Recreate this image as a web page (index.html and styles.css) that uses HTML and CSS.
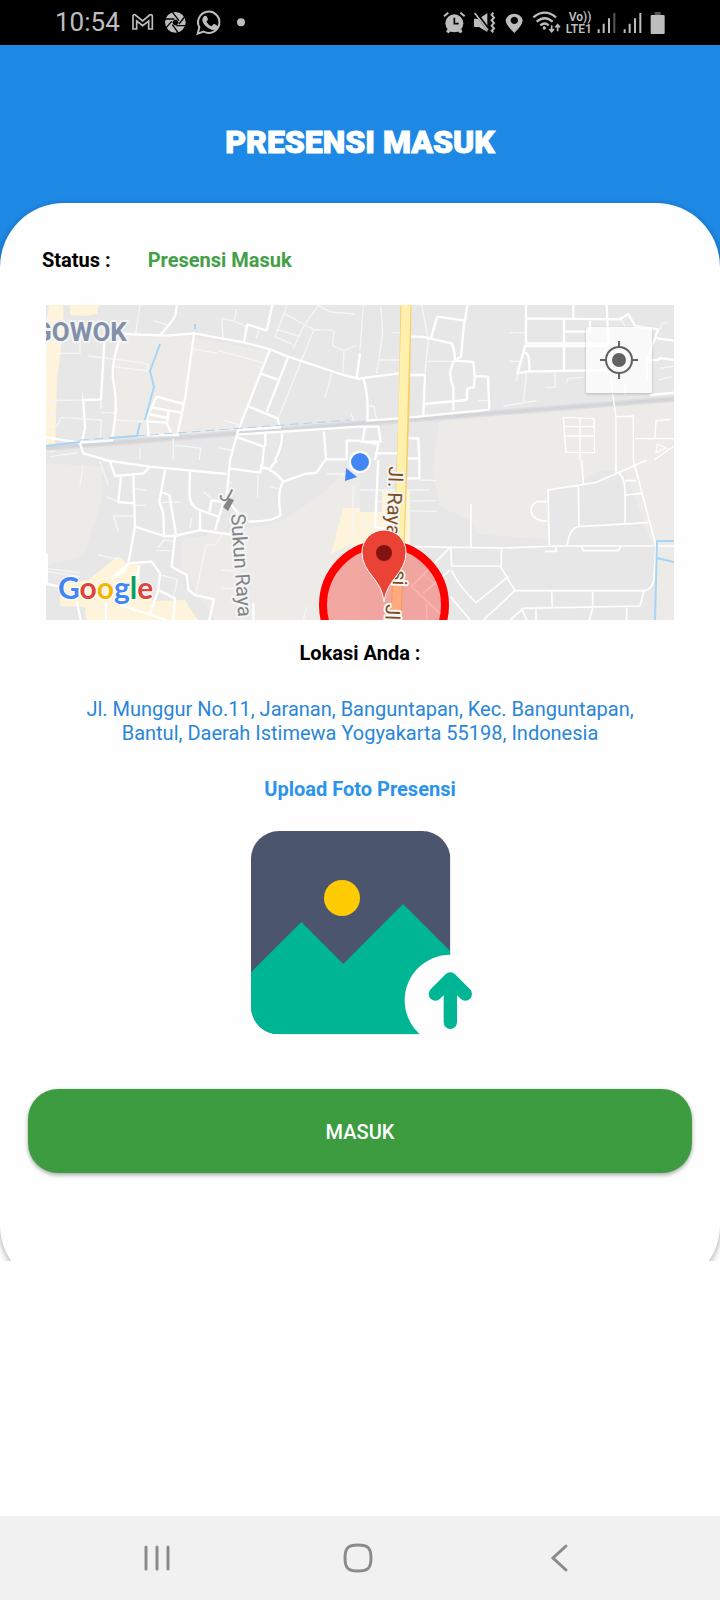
FILE: index.html
```html
<!DOCTYPE html>
<html lang="id">
<head>
<meta charset="utf-8">
<meta name="viewport" content="width=device-width, initial-scale=1">
<title>Presensi Masuk</title>
<link rel="stylesheet" href="styles.css">
</head>
<body>
<div class="statusbar">
  <time class="clock">10:54</time>
  <svg class="status-left" viewBox="393 0 348 132" aria-hidden="true">
    <path d="M399 87V49q0-8 7-4l22 18 21-18q8-4 8 4v38h-11V63l-18 14-18-14v24z" fill="none" stroke="#bdbdbd" stroke-width="5"/>
    <circle cx="526" cy="67" r="31" fill="#bdbdbd"/>
    <path d="M537 62L516 35M537 72L556 48M529 77L558 77M517 74L535 99M515 64L496 86M523 57L495 57" stroke="#000" stroke-width="4"/>
    <path d="M522 59h9l5 8-5 9h-9l-5-9z" fill="#000"/>
    <path d="M593 101l5-19a32 32 0 1 1 13 13z" fill="none" stroke="#bdbdbd" stroke-width="6"/>
    <path d="M612 49q4-4 8 0l4 9q0 3-5 7 6 10 16 14l5-6q2-2 5 0l8 5q2 2-1 7-6 8-17 4-21-7-28-27-1-8 5-13z" fill="#bdbdbd"/>
    <circle cx="723" cy="67" r="12" fill="#bdbdbd"/>
  </svg>
  <svg class="status-right" viewBox="130 0 669 132" aria-hidden="true">
    <g fill="#bdbdbd">
      <circle cx="164" cy="70" r="27"/>
      <path d="M142 88l12 5-7 7-7-4zM186 88l-12 5 7 7 7-4z"/>
      <path d="M133 49l13-11M195 49l-13-11" stroke="#bdbdbd" stroke-width="6"/>
      <path d="M164 53v18h13" fill="none" stroke="#000" stroke-width="5"/>
      <path d="M223 56h15l25-17v57l-25-15h-15z"/>
      <path d="M226 35l46 62" stroke="#000" stroke-width="10"/>
      <path d="M225 39l40 52" stroke="#bdbdbd" stroke-width="5"/>
      <path d="M281 38l-5 7 7 8-7 8 7 8-7 8 7 8-7 7 5 5" fill="none" stroke="#bdbdbd" stroke-width="6"/>
      <path fill-rule="evenodd" d="M344 99q-26-24-26-38a26 25 0 0 1 51 0q0 14-25 38zM344 50a11 11 0 1 0 .1 0z"/>
      <g fill="none" stroke="#bdbdbd" stroke-width="7">
        <path d="M401 52q34-28 68 0M411 65q24-21 48 0M422 76q13-11 25 0"/>
        <path d="M456 76v18m-7-7l7 8 7-8M474 94V74m-7 8l7-8 7 8" stroke-width="5"/>
      </g>
      <circle cx="434" cy="84" r="5"/>
      <text x="507" y="63" class="volte">Vo))</text>
      <text x="498" y="99" class="volte">LTE1</text>
      <path d="M594 88h6v11h-6zM609 71h6v28h-6zM625 55h6v44h-6zM672 88h6v11h-6zM687 71h6v28h-6zM703 55h6v44h-6zM719 39h6v60h-6z"/>
      <path d="M641 39h6v60h-6zM765 36h18v9h-18z" fill="#555"/>
      <rect x="753" y="45" width="42" height="57" rx="3"/>
    </g>
  </svg>
</div>

<main class="screen">
  <header class="header"><h1 class="title">PRESENSI MASUK</h1></header>
  <section class="card">
    <dl class="status"><dt>Status :</dt><dd>Presensi Masuk</dd></dl>

    <div class="map">
      <svg class="map-art" viewBox="46 305 628 315" role="img" aria-label="Peta lokasi">
        <rect x="46" y="305" width="628" height="315" fill="#e7e7e7"/>
        <g fill="#ecebe7">
          <path d="M118 336L192 334 182 433 112 438 115 370z"/>
          <path d="M193 338L268 351 238 434 182 434z"/>
          <path d="M46 463L102 467 102 500 84 555 46 566z"/>
          <path d="M440 421L674 400V620H655V545L550 540 477 534 471 520 440 507 432 470z"/>
          <path d="M280 522Q340 485 348 463H360V620H215L180 565 182 540z"/>
        </g>
        <path fill="#e7e7e7" d="M546 490L575 485 600 470 625 472 652 545 550 540z"/>
        <g fill="#fdf4db">
          <path d="M49 305H63L64 325 57 380 55 452H46V325zM70 305H99L97 314 85 316 70 315z"/>
          <path d="M343 508H360V512H382V491H410V545H350L331 554z"/>
          <path d="M118 556L126 563 140 565V594L155 601 185 600 198 620H86L85 607 60 606V584L88 580z"/>
        </g>
        <path d="M46 448L125 442 674 399" fill="none" stroke="#dcdddf" stroke-width="6"/>
        <path d="M46 448L125 442 674 399" fill="none" stroke="#d3d5d9" stroke-width="3"/>

        <g class="minor" transform="translate(40 300) scale(.33333)">
          <path d="M120 60V160H60M22 160V80M300 15L287 100M340 62L382 75M145 168L305 188 326 193 320 213 222 200M128 278V300L20 302M185 325H183V300M18 380H50L64 352 185 360 180 415M38 305L35 346H20M185 338H225M225 360L320 365M460 147L534 160M534 152L668 188M620 80L580 62 545 55 550 115M583 60L590 28M657 92L648 115M740 15L733 40 790 72M733 40L705 110 760 133M710 88L775 108M835 16L790 80 760 145M790 75L822 88 882 92 878 137 912 152 950 135M912 152L908 225M835 16L870 36 945 42M822 88L715 355M876 218L855 293M932 340L942 362M550 360L595 374M400 415V480M405 436L482 444 478 480M535 444L575 450M300 445V480M30 470L115 458M415 380V410"/>
        </g>
        <g class="roads" transform="translate(40 300) scale(.33333)">
          <path d="M250 102L380 107 462 100 615 128 690 148 745 170 910 225 960 237"/>
          <path d="M410 15L407 42Q402 60 362 103M193 125L183 298 130 300 135 385 126 425M238 120Q208 210 223 260 235 330 215 420M462 100L436 290 412 405 325 405 322 350 350 290 430 312M335 322L388 332 424 338M330 343L382 354 386 332M328 365L380 368 394 400M388 332L382 365M18 412L120 428 220 421M120 430L130 460 200 480"/>
          <path d="M690 148L595 390 720 382 712 355 622 318M660 220L712 238M745 170L680 335M595 390L570 480M592 412L672 440 668 480M676 402V440M726 400Q728 440 705 480M852 395L858 478H920V422H960M590 404L960 380M697 15L680 92 622 73 612 128M960 160L950 235"/>
        </g>
        <g class="minor" transform="translate(360 300) scale(.33333)">
          <path d="M10 15L0 150M62 18L68 100 50 222M95 98H120M60 180H118M185 15L205 120 195 220M200 184H285M448 98H495M448 184H480L470 245M500 215L490 310M430 318L530 302M585 220V262H555M618 250L625 235 670 232M780 50L795 80M900 90L905 70 922 68M900 204L942 200M895 240L935 230M795 250V285M355 302H388M25 318H42L50 360"/>
        </g>
        <g class="roads" transform="translate(360 300) scale(.33333)">
          <path d="M150 110H185L275 130Q288 160 283 182 260 220 280 260V332M212 117L232 50 315 62 322 15M313 62L303 170 283 182 340 186 344 228 384 230 388 328M344 228L342 262 322 265 320 300 192 312M150 225H195L190 345M0 235L118 220M10 235Q26 280 22 362L120 355 388 329M498 15V130L472 220 500 215 740 210M498 55L780 58 805 42 825 78 895 88 860 180 862 240M640 15V55M740 15L745 130H498M498 138H745M612 58V215M612 95H690V62M492 160Q510 150 508 215M890 115L942 122M865 180H895L900 174 942 180M870 285L942 278"/>
          <path d="M610 352L702 356 704 458 618 457zM660 354V480M610 380H703M610 408H703" stroke-width="4"/>
          <path d="M752 240L768 350V480M768 350L820 348 820 480M825 416H942M885 414L888 362 932 358M885 478L942 438M892 432L888 458 920 444Z" stroke-width="4"/>
          <path d="M0 380H55L62 425H0M15 380L8 425 55 432 45 480M138 414L175 416 178 480M45 460H118M138 475H175"/>
        </g>
        <g class="minor" transform="translate(40 460) scale(.33333)">
          <path d="M128 15L120 80M180 5L205 75M198 110L235 125M280 85L318 90M285 136H318M280 168H220L235 215M175 285L235 298M355 128L420 126M350 272H392M400 244L372 240 352 265M545 225L525 255H498L468 400M455 175L450 205M490 95L515 115M655 45L652 112M690 80L715 85M545 330L600 335M545 385H590M20 325L120 338M20 335L120 350M860 42H930M940 80L935 290M560 70L575 68M800 440L790 480M360 345L412 358 402 405"/>
        </g>
        <g class="roads" transform="translate(40 460) scale(.33333)">
          <path d="M190 0L330 20 560 42M210 5L225 48 310 40 330 20M243 48L235 126 285 130M280 42L285 200 265 310 215 355M376 25L358 125 370 160 372 228M360 95L388 105 408 222M450 32L448 100Q448 140 480 150L540 172M515 120L508 155M285 200L372 228 405 228 480 210 580 225M480 152V210M515 120L550 128 525 210M570 0L560 110M570 25L660 38 670 0M660 18Q705 30 730 65L795 42 830 38 855 0M730 65Q710 90 722 165 700 185 625 184M560 120L600 165"/>
          <path d="M405 228L395 320 440 345 446 390 465 405 522 418 508 480M215 355L250 335 265 310 335 305 360 340 355 390 330 460M298 315L290 360M110 425L122 480M198 425V480M240 435L380 480M355 390L405 415 400 480M20 280V372L60 380M640 430V480M690 25L710 0"/>
        </g>
        <g class="minor" transform="translate(360 460) scale(.33333)">
          <path d="M0 90H208M50 125L230 122M130 152L230 154M178 60L228 62M0 195L65 210M190 345L250 390"/>
        </g>
        <g class="roads" transform="translate(360 460) scale(.33333)">
          <path d="M55 0L45 200 80 208M178 0V55H138"/>
          <g stroke-width="5">
            <path d="M333 132V260M145 260L430 264 590 258H942M270 262L155 380 260 480M272 262L275 318H420L465 392H855Q883 385 883 340L888 258 820 0M424 264V318M275 330Q290 370 348 428L445 350M465 392L370 480M450 480L490 445 840 438 852 392M575 392L577 445M698 392V445L688 480M272 410L330 480M485 445L500 480M528 445V480M800 440V480M568 260L564 90 705 68 775 38 860 0M562 125H530Q512 135 513 155 520 182 562 184M655 75L657 200M622 255Q628 205 655 200L865 188M665 0L670 72M775 38Q795 50 795 100V190M795 62H828M798 105L845 100M555 274H588V258M665 260L670 272H775L782 260M768 0V38"/>
            <path d="M270 330L190 400M200 430V480"/>
          </g>
        </g>

        <g fill="none" stroke="#a8d4f5" stroke-width="2">
          <path d="M160 344L150 371 154 387 145 420M140 423L137 436 110 438M46 446L80 442M195 324V329M674 541L657 541 655 620M657 558L674 562"/>
          <path d="M80 440L190 432 350 420" stroke-width="1" stroke-dasharray="9 5"/>
        </g>
        <path d="M406 305L404 410 400 520 396 620" fill="none" stroke="#f7cf68" stroke-width="11"/>
        <path d="M406 305L403 410 400 520 396 620" fill="none" stroke="#fff0ae" stroke-width="9"/>

        <circle cx="384" cy="605" r="61" fill="#ff3b30" fill-opacity=".38" stroke="#f00" stroke-width="8"/>

        <g class="map-label">
          <text x="34" y="341" class="district">GOWOK</text>
          <text class="street" transform="translate(231 514) rotate(86)">Sukun Raya</text>
          <text class="street" transform="translate(218 498) rotate(28)">J</text>
          <path d="M223 507l6-9 5 2-6 11z" fill="#858585"/>
          <text class="highway" transform="translate(389 466) rotate(92)">Jl. Raya</text>
          <text class="highway" transform="translate(393 570) rotate(92)">si</text>
          <text class="highway" transform="translate(386 604) rotate(92)">Jl</text>
        </g>
        <text x="58" y="599" class="google"><tspan fill="#4285f4">G</tspan><tspan fill="#db4437">o</tspan><tspan fill="#f4b400">o</tspan><tspan fill="#4285f4">g</tspan><tspan fill="#0f9d58">l</tspan><tspan fill="#db4437">e</tspan></text>

        <path d="M384 602C382 578 362 574 362 552A22 22 0 0 1 406 552C406 574 387 578 384 602z" fill="#ea4335" stroke="#fff" stroke-width="1"/>
        <circle cx="384" cy="553" r="8" fill="#811411"/>
        <path d="M346 468L345 481 357 477z" fill="#4285f4"/>
        <circle cx="360" cy="462" r="10" fill="#4285f4" stroke="#fff" stroke-width="2"/>
      </svg>
      <button class="locate" type="button" aria-label="Lokasi saya">
        <svg viewBox="0 0 38 38"><g fill="none" stroke="#616161" stroke-width="2"><circle cx="19" cy="19" r="13"/><path d="M19 0V6M19 32V38M0 19H6M32 19H38"/></g><circle cx="19" cy="19" r="7" fill="#616161"/></svg>
      </button>
    </div>

    <h2 class="label">Lokasi Anda :</h2>
    <p class="address">Jl. Munggur No.11, Jaranan, Banguntapan, Kec. Banguntapan, Bantul, Daerah Istimewa Yogyakarta 55198, Indonesia</p>
    <h2 class="label upload-label" id="upload-label">Upload Foto Presensi</h2>
    <button class="upload" type="button" aria-labelledby="upload-label">
      <svg viewBox="54 63 672 612" aria-hidden="true">
        <defs><clipPath id="photo"><rect x="63" y="63" width="598" height="610" rx="84"/></clipPath></defs>
        <g clip-path="url(#photo)">
          <path d="M63 63H661V673H63z" fill="#4b566e"/>
          <path d="M63 487L214 336 340 462 519 282 661 424V673H63z" fill="#00b594"/>
        </g>
        <circle cx="661" cy="571" r="137" fill="#fefefe"/>
        <circle cx="336" cy="264" r="54" fill="#ffcc03"/>
        <path d="M661 637V520M616 552L661 507 706 552" fill="none" stroke="#00b594" stroke-width="40" stroke-linecap="round" stroke-linejoin="round"/>
      </svg>
    </button>
    <button class="submit" type="button">MASUK</button>
  </section>
</main>

<nav class="navbar" aria-label="Navigasi sistem">
  <button type="button" aria-label="Aplikasi terbaru"><svg viewBox="0 0 30 30"><path d="M4 4V26M15 4V26M26 4V26"/></svg></button>
  <button type="button" aria-label="Beranda"><svg viewBox="0 0 30 30"><path d="M15 2C25 2 28 5 28 15S25 28 15 28 2 25 2 15 5 2 15 2z"/></svg></button>
  <button type="button" aria-label="Kembali"><svg viewBox="0 0 30 30"><path d="M22 3L9 15 22 27"/></svg></button>
</nav>
</body>
</html>
```

FILE: styles.css
```css
* { box-sizing: border-box; }

body {
  margin: 0;
  min-height: 100vh;
  display: flex;
  flex-direction: column;
  background: #fefefe;
  font-family: Roboto, "Liberation Sans", sans-serif;
  font-size: 20px;
  line-height: 24px;
  color: #000;
}

button {
  padding: 0;
  border: 0;
  background: none;
  font: inherit;
  cursor: pointer;
}

svg { display: block; }

.statusbar {
  display: flex;
  align-items: center;
  height: 45px;
  padding: 0 54px 1px 55px;
  background: #000;
}

.clock {
  color: #bdbdbd;
  font-size: 26px;
}

.status-left {
  width: 116px;
  height: 44px;
  margin-left: 11px;
}

.status-right {
  width: 223px;
  height: 44px;
  margin-left: auto;
}

.volte {
  font-size: 36px;
  font-weight: 600;
}

.screen {
  overflow: hidden;
  background: linear-gradient(#1e88e5 240px, #fefefe 240px);
}

.header {
  display: flex;
  align-items: center;
  justify-content: center;
  height: 158px;
  padding-top: 36px;
}

.title {
  margin: 0;
  color: #fff;
  font-size: 32px;
  font-weight: 900;
  line-height: 40px;
  -webkit-text-stroke: 1px #fff;
}

.card {
  display: flex;
  flex-direction: column;
  margin-bottom: -28px;
  padding: 45px 28px 116px;
  border-radius: 64px;
  background: #fefefe;
  box-shadow: 0 2px 6px rgba(0, 0, 0, .35);
}

.status {
  display: flex;
  gap: 37px;
  margin: 0 14px 33px;
  font-weight: 700;
}

.status dd {
  margin: 0;
  color: #43a047;
}

.map {
  position: relative;
  margin: 0 18px;
}

.map-art {
  width: 100%;
  height: auto;
}

.minor,
.roads {
  fill: none;
  stroke: #fff;
  stroke-linejoin: round;
}

.minor {
  stroke: #f5f6f7;
  stroke-width: 4;
}

.roads { stroke-width: 7; }

.map-label text {
  paint-order: stroke;
  stroke: #f4f4f4;
  stroke-width: 4px;
  stroke-linejoin: round;
}

.district {
  fill: #8190a8;
  font-size: 26px;
  font-weight: 700;
}

.street {
  fill: #808487;
  font-size: 20px;
}

.highway {
  fill: #7d4e1e;
  font-size: 20px;
}

.google {
  paint-order: stroke;
  stroke: #fff;
  stroke-width: 2px;
  font-family: Lato, sans-serif;
  font-size: 30px;
  font-weight: 700;
}

.locate {
  position: absolute;
  top: 22px;
  right: 22px;
  display: grid;
  place-items: center;
  width: 66px;
  height: 66px;
  border-radius: 2px;
  background: rgba(255, 255, 255, .75);
  box-shadow: 0 1px 3px rgba(0, 0, 0, .2);
}

.locate svg {
  width: 38px;
  height: 38px;
}

.label {
  margin: 21px 0 0;
  font-size: 20px;
  font-weight: 700;
  line-height: 24px;
  text-align: center;
}

.address {
  margin: 32px 48px 0;
  color: #2a86d9;
  text-align: center;
}

.upload-label {
  margin-top: 32px;
  color: #2b93ea;
}

.upload {
  align-self: center;
  margin-top: 30px;
}

.upload svg {
  width: 224px;
  height: 204px;
}

.submit {
  height: 84px;
  margin-top: 54px;
  padding-top: 2px;
  border-radius: 30px;
  background: #3d9c40;
  box-shadow: 0 2px 4px rgba(0, 0, 0, .35);
  color: #fff;
  font-weight: 500;
}

.navbar {
  display: grid;
  grid-template-columns: repeat(3, 1fr);
  height: 84px;
  margin-top: auto;
  padding: 0 60px 0 56px;
  background: #f1f1f1;
}

.navbar button {
  display: grid;
  place-items: center;
}

.navbar svg {
  width: 30px;
  height: 30px;
  fill: none;
  stroke: #8b8b8b;
  stroke-width: 3;
  stroke-linecap: round;
}
```
